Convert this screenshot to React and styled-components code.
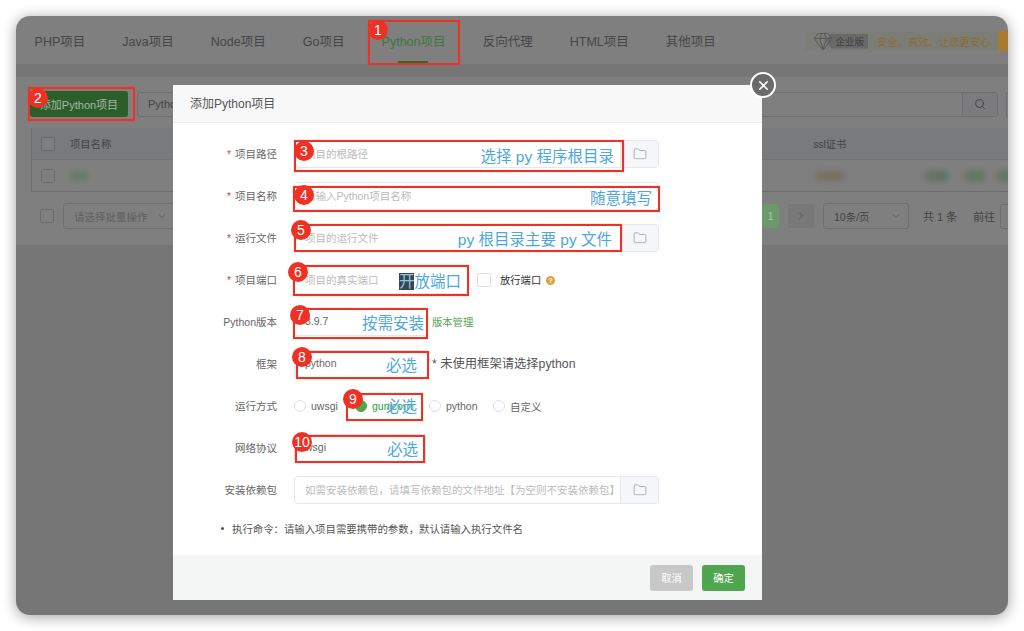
import React from 'react';
import styled, { createGlobalStyle, css } from 'styled-components';
import { ChevronDown, ChevronRight, Folder, Gem, Search, X } from 'lucide-react';

const GlobalStyle = createGlobalStyle`
    html, body {
        margin: 0;
        background: #fff;
    }
    * {
        box-sizing: border-box;
    }
`;

// brighter than the dimming layer allows, so these sit above it with their final colours
const aboveOverlay = css`
    position: relative;
    z-index: 2;
`;

const Root = styled.div`
    position: relative;
    width: 1024px;
    height: 631px;
    padding: 16px;
    overflow: hidden;
    font-family: 'Liberation Sans', 'Noto Sans CJK SC', sans-serif;
`;

const Window = styled.div`
    position: relative;
    isolation: isolate;
    display: flex;
    flex-direction: column;
    height: 599px;
    border-radius: 14px;
    overflow: hidden;
    background: #ececec;
    box-shadow: 0 2px 14px rgba(0, 0, 0, 0.38);
`;

const TopNav = styled.div`
    display: flex;
    align-items: stretch;
    height: 48px;
    background: #fff;
    flex: none;
`;

const NavList = styled.div`
    display: flex;
`;

const NavItem = styled.div`
    position: relative;
    display: flex;
    align-items: center;
    padding: 0 18.55px;
    font-size: 12.5px;
    white-space: nowrap;
    color: ${(p) => (p.$active ? '#79ee79' : '#8c8c8c')};

    &::after {
        content: '';
        display: ${(p) => (p.$active ? 'block' : 'none')};
        position: absolute;
        left: 35px;
        width: 30px;
        bottom: 1px;
        height: 2px;
        background: #56d856;
    }
`;

const Promo = styled.div`
    display: flex;
    align-items: center;
    margin: 16px 0 14px auto;
    height: 18px;
    width: 203px;
    background: #fbfaf0;
    padding-left: 8px;
    flex: none;
`;

const PromoGem = styled.span`
    position: relative;
    z-index: 1;
    display: flex;
    color: #a8a8a8;
    flex: none;
`;

const PromoTag = styled.span`
    display: flex;
    align-items: center;
    justify-content: flex-end;
    width: 42px;
    height: 15px;
    margin-left: -7px;
    padding-right: 4px;
    background: #d2d2d2;
    color: #808080;
    font-size: 9.5px;
    clip-path: polygon(5px 0, 100% 0, 100% 100%, 5px 100%, 0 50%);
    flex: none;
`;

const PromoText = styled.span`
    ${aboveOverlay}
    margin-left: 9px;
    font-size: 10.3px;
    white-space: nowrap;
    color: #8c6a30;
`;

const PromoButton = styled.span`
    ${aboveOverlay}
    width: 10px;
    height: 20px;
    margin-left: 8px;
    background: #a87c30;
    border-radius: 2px 0 0 2px;
    flex: none;
`;

const Content = styled.div`
    margin-top: 13px;
    height: 168px;
    padding: 14px 0 0 15px;
    background: #fff;
    flex: none;
`;

const Toolbar = styled.div`
    display: flex;
    align-items: center;
    height: 26px;
`;

const PrimaryButton = styled.div`
    ${aboveOverlay}
    display: flex;
    align-items: center;
    justify-content: center;
    width: 98px;
    height: 26px;
    margin-left: -1px;
    border-radius: 3px;
    background: #2c5e2c;
    color: #a4b8a4;
    font-size: 11px;
`;

const GhostButton = styled.div`
    display: flex;
    align-items: center;
    width: 70px;
    height: 25px;
    margin-left: 9px;
    padding-left: 10px;
    border: 1px solid #d8dce2;
    border-radius: 3px;
    color: #888;
    font-size: 11px;
`;

const SearchBox = styled.div`
    display: flex;
    margin-left: auto;
    height: 25px;
    width: 300px;
    border: 1px solid #d8dce2;
    border-radius: 3px;
    justify-content: flex-end;
`;

const SearchButton = styled.div`
    display: flex;
    align-items: center;
    justify-content: center;
    width: 35px;
    background: #f6f7fa;
    border-left: 1px solid #d8dce2;
    color: #888;
`;

const CutOffBox = styled.div`
    width: ${(p) => p.$width}px;
    height: 25px;
    margin-left: ${(p) => p.$left}px;
    border: 1px solid #d8dce2;
    border-right: none;
    border-radius: 3px 0 0 3px;
    flex: none;
`;

const Table = styled.div`
    margin-top: 11px;
    border-left: 1px solid #d8d8d8;
    border-bottom: 1px solid #d8d8d8;
`;

const TableRow = styled.div`
    position: relative;
    display: flex;
    align-items: center;
    height: ${(p) => (p.$head ? 32 : 31)}px;
    padding-left: 9px;
    background: ${(p) => (p.$head ? '#f2f4f7' : '#fff')};
    border-bottom: ${(p) => (p.$head ? '1px solid #e6e6e6' : 'none')};
`;

const CheckBox = styled.span`
    display: block;
    width: 14px;
    height: 14px;
    border: 1px solid #d0d4da;
    border-radius: 2px;
    background: #fff;
    flex: none;
`;

const HeadCell = styled.span`
    font-size: 10.3px;
    color: #888;
    margin-left: ${(p) => p.$left}px;
    white-space: nowrap;
`;

const Blob = styled.span`
    display: block;
    width: ${(p) => p.$width}px;
    height: 10px;
    margin-left: ${(p) => p.$left}px;
    border-radius: 4px;
    background: ${(p) => p.$color};
    filter: blur(3px);
    flex: none;
`;

const Pager = styled.div`
    display: flex;
    align-items: center;
    height: 26px;
    margin-top: 11px;
    padding-left: 9px;
    font-size: 11px;
    color: #888;
`;

const PagerSelect = styled.div`
    display: flex;
    align-items: center;
    justify-content: space-between;
    width: ${(p) => p.$width}px;
    height: 26px;
    margin-left: ${(p) => p.$left}px;
    padding: 0 6px 0 10px;
    border: 1px solid #d8dce2;
    border-radius: 3px;
    color: ${(p) => p.$color || '#c0c0c0'};
    font-size: 10.5px;
    white-space: nowrap;
    flex: none;
`;

const PageCurrent = styled.span`
    ${aboveOverlay}
    display: flex;
    align-items: center;
    justify-content: center;
    width: 17px;
    height: 24px;
    margin-left: 587px;
    border-radius: 0 2px 2px 0;
    background: #6a9a6a;
    color: #a8c8a8;
    flex: none;
`;

const PageNext = styled.span`
    display: flex;
    align-items: center;
    justify-content: center;
    width: 26px;
    height: 24px;
    margin-left: 9px;
    border-radius: 2px;
    background: #f0f0f1;
    color: #b0b0b0;
    flex: none;
`;

const PagerText = styled.span`
    margin-left: ${(p) => p.$left}px;
    white-space: nowrap;
    flex: none;
`;

const Overlay = styled.div`
    position: absolute;
    inset: 0;
    z-index: 1;
    padding: 69px 0 0 157px;
    background: rgba(0, 0, 0, 0.5);
`;

const Modal = styled.div`
    position: relative;
    display: flex;
    flex-direction: column;
    width: 589px;
    height: 515px;
    background: #fff;
    border-radius: 2px;
`;

const ModalHeader = styled.div`
    display: flex;
    align-items: center;
    height: 38px;
    padding: 0 0 2px 17px;
    background: #f8f8f8;
    border-bottom: 1px solid #eee;
    color: #555;
    font-size: 12px;
    flex: none;
`;

const CloseButton = styled.div`
    position: absolute;
    top: -13px;
    right: -14px;
    display: flex;
    align-items: center;
    justify-content: center;
    width: 26px;
    height: 26px;
    border: 2px solid #fff;
    border-radius: 50%;
    background: #6a6a6a;
    color: #fff;
`;

const ModalBody = styled.div`
    flex: 1;
    padding-top: 10px;
`;

const FormRow = styled.div`
    display: flex;
    align-items: center;
    height: 42px;
`;

const FieldLabel = styled.div`
    width: 104px;
    margin-right: 17px;
    padding-bottom: 2px;
    text-align: right;
    font-size: 10.5px;
    color: #666;
    white-space: nowrap;
    flex: none;
`;

const Required = styled.span`
    color: #e5443a;
    margin-right: 4px;
`;

const InputGroup = styled.div`
    display: flex;
    width: ${(p) => p.$width}px;
    height: 28px;
    border: 1px solid #e4e7ed;
    border-radius: 4px;
    overflow: hidden;
    flex: none;
`;

const InputText = styled.div`
    display: flex;
    align-items: center;
    flex: 1;
    padding: 0 0 2px 10px;
    font-size: 10.5px;
    white-space: nowrap;
    color: ${(p) => (p.$value ? '#666' : '#bbb')};
`;

const FolderButton = styled.div`
    display: flex;
    align-items: center;
    justify-content: center;
    width: 38px;
    background: #f5f7fa;
    border-left: 1px solid #e4e7ed;
    color: #999;
    flex: none;
`;

const Hint = styled.span`
    margin-left: ${(p) => p.$left}px;
    padding-bottom: 2px;
    font-size: ${(p) => p.$size}px;
    color: ${(p) => p.$color};
    white-space: nowrap;
`;

const PortCheck = styled.span`
    display: block;
    width: 14px;
    height: 14px;
    margin-left: 9px;
    border: 1px solid #dcdfe6;
    border-radius: 2px;
    flex: none;
`;

const HelpDot = styled.span`
    display: flex;
    align-items: center;
    justify-content: center;
    width: 9px;
    height: 9px;
    margin-left: 5px;
    border-radius: 50%;
    background: #e0a040;
    color: #fff;
    font-size: 7px;
    font-weight: 700;
    flex: none;
`;

const RadioGroup = styled.div`
    display: flex;
    align-items: center;
`;

const RadioItem = styled.div`
    display: flex;
    align-items: center;
    width: ${(p) => p.$width}px;
    font-size: 10.5px;
    color: ${(p) => (p.$on ? '#20a53a' : '#666')};
    white-space: nowrap;
`;

const RadioMark = styled.span`
    display: block;
    width: 12px;
    height: 12px;
    margin-right: 5px;
    border-radius: 50%;
    border: 1px solid ${(p) => (p.$on ? '#4fa64f' : '#dcdfe6')};
    background: ${(p) => (p.$on ? '#4fa64f' : '#fff')};
    flex: none;
`;

const NoteLine = styled.div`
    display: flex;
    align-items: center;
    margin-top: 10px;
    padding-left: 48px;
    font-size: 10.4px;
    color: #555;
    white-space: nowrap;

    &::before {
        content: '';
        width: 3px;
        height: 3px;
        margin-right: 8px;
        border-radius: 50%;
        background: #555;
    }
`;

const ModalFooter = styled.div`
    display: flex;
    justify-content: flex-end;
    align-items: center;
    gap: 9px;
    height: 45px;
    padding-right: 17px;
    background: #f4f6f5;
    flex: none;
`;

const FooterButton = styled.div`
    display: flex;
    align-items: center;
    justify-content: center;
    width: 43px;
    height: 26px;
    border-radius: 3px;
    background: ${(p) => (p.$primary ? '#4fa64f' : '#c8c8c8')};
    color: #fff;
    font-size: 10.3px;
`;

const Markup = styled.div`
    position: absolute;
    left: ${(p) => p.$x}px;
    top: ${(p) => p.$y}px;
    width: ${(p) => p.$w}px;
    height: ${(p) => p.$h}px;
    border: 2px solid #ee3124;
    box-shadow: 0 0 1px rgba(238, 49, 36, 0.5);
`;

const Badge = styled.span`
    position: absolute;
    left: ${(p) => p.$x - 10}px;
    top: ${(p) => p.$y - 10}px;
    display: flex;
    align-items: center;
    justify-content: center;
    width: 20px;
    height: 20px;
    border-radius: 50%;
    background: #ee3124;
    color: #fff;
    font-size: 14px;
`;

const Callout = styled.span`
    position: absolute;
    right: ${(p) => 1024 - p.$right}px;
    top: ${(p) => p.$y - 10}px;
    height: 20px;
    line-height: 20px;
    font-size: 15.5px;
    color: #4ea7da;
    white-space: nowrap;
`;

const Highlight = styled.span`
    background: #37474f;
    color: #8fc4e4;
`;

const navItems = ['PHP项目', 'Java项目', 'Node项目', 'Go项目', 'Python项目', '反向代理', 'HTML项目', '其他项目'];

const markups = [
    { id: 1, x: 368, y: 20, w: 92, h: 45, bx: 378, by: 30 },
    { id: 2, x: 28, y: 87, w: 107, h: 34, bx: 38, by: 98 },
    { id: 3, x: 294, y: 140, w: 330, h: 32, bx: 304, by: 151, text: '选择 py 程序根目录', right: 614, ty: 157 },
    { id: 4, x: 293, y: 186, w: 367, h: 26, bx: 304, by: 195, text: '随意填写', right: 652, ty: 199 },
    { id: 5, x: 294, y: 224, w: 328, h: 28, bx: 301, by: 230, text: 'py 根目录主要 py 文件', right: 612, ty: 240 },
    { id: 6, x: 293, y: 265, w: 176, h: 31, bx: 298, by: 272, right: 461, ty: 282 },
    { id: 7, x: 293, y: 308, w: 135, h: 31, bx: 300, by: 315, text: '按需安装', right: 424, ty: 324 },
    { id: 8, x: 296, y: 351, w: 133, h: 28, bx: 302, by: 357, text: '必选', right: 417, ty: 366 },
    { id: 9, x: 346, y: 393, w: 77, h: 28, bx: 353, by: 399, text: '必选', right: 417, ty: 407 },
    { id: 10, x: 295, y: 435, w: 130, h: 28, bx: 302, by: 442, text: '必选', right: 418, ty: 450 },
];

const BackgroundPage = () => (
    <>
        <TopNav>
            <NavList>
                {navItems.map((item) => (
                    <NavItem key={item} $active={item === 'Python项目'}>
                        {item}
                    </NavItem>
                ))}
            </NavList>
            <Promo>
                <PromoGem>
                    <Gem size={20} strokeWidth={1.1} />
                </PromoGem>
                <PromoTag>企业版</PromoTag>
                <PromoText>安全、高效、让您更安心</PromoText>
                <PromoButton />
            </Promo>
        </TopNav>
        <Content>
            <Toolbar>
                <PrimaryButton>添加Python项目</PrimaryButton>
                <GhostButton>Python</GhostButton>
                <SearchBox>
                    <SearchButton>
                        <Search size={12} />
                    </SearchButton>
                </SearchBox>
                <CutOffBox $width={2} $left={8} />
            </Toolbar>
            <Table>
                <TableRow $head>
                    <CheckBox />
                    <HeadCell $left={15}>项目名称</HeadCell>
                    <HeadCell $left={702}>ssl证书</HeadCell>
                </TableRow>
                <TableRow>
                    <CheckBox />
                    <Blob $width={18} $left={15} $color="#d6ecd6" />
                    <Blob $width={30} $left={727} $color="#f5dcc0" />
                    <Blob $width={24} $left={80} $color="#c4e2c4" />
                    <Blob $width={20} $left={16} $color="#c4e2c4" />
                    <Blob $width={20} $left={12} $color="#c4e2c4" />
                </TableRow>
            </Table>
            <Pager>
                <CheckBox />
                <PagerSelect $width={112} $left={9}>
                    请选择批量操作
                    <ChevronDown size={12} />
                </PagerSelect>
                <PageCurrent>1</PageCurrent>
                <PageNext>
                    <ChevronRight size={12} />
                </PageNext>
                <PagerSelect $width={86} $left={9} $color="#888">
                    10条/页
                    <ChevronDown size={12} color="#bbb" />
                </PagerSelect>
                <PagerText $left={14}>共 1 条</PagerText>
                <PagerText $left={16}>前往</PagerText>
                <CutOffBox $width={12} $left={5} />
            </Pager>
        </Content>
    </>
);

const FolderAddon = () => (
    <FolderButton>
        <Folder size={14} strokeWidth={1.3} />
    </FolderButton>
);

const Field = ({ label, required, children }) => (
    <FormRow>
        <FieldLabel>
            {required && <Required>*</Required>}
            {label}
        </FieldLabel>
        {children}
    </FormRow>
);

const AddProjectModal = () => (
    <Modal>
        <CloseButton>
            <X size={15} strokeWidth={2.6} />
        </CloseButton>
        <ModalHeader>添加Python项目</ModalHeader>
        <ModalBody>
            <Field label="项目路径" required>
                <InputGroup $width={365}>
                    <InputText>项目的根路径</InputText>
                    <FolderAddon />
                </InputGroup>
            </Field>
            <Field label="项目名称" required>
                <InputGroup $width={365}>
                    <InputText>请输入Python项目名称</InputText>
                </InputGroup>
            </Field>
            <Field label="运行文件" required>
                <InputGroup $width={365}>
                    <InputText>项目的运行文件</InputText>
                    <FolderAddon />
                </InputGroup>
            </Field>
            <Field label="项目端口" required>
                <InputGroup $width={174}>
                    <InputText>项目的真实端口</InputText>
                </InputGroup>
                <PortCheck />
                <Hint $left={9} $size={10.3} $color="#333">
                    放行端口
                </Hint>
                <HelpDot>?</HelpDot>
            </Field>
            <Field label="Python版本">
                <InputGroup $width={134}>
                    <InputText $value>3.9.7</InputText>
                </InputGroup>
                <Hint $left={4} $size={10.3} $color="#4fa64f">
                    版本管理
                </Hint>
            </Field>
            <Field label="框架">
                <InputGroup $width={134}>
                    <InputText $value>python</InputText>
                </InputGroup>
                <Hint $left={4} $size={12.3} $color="#555">
                    * 未使用框架请选择python
                </Hint>
            </Field>
            <Field label="运行方式">
                <RadioGroup>
                    <RadioItem $width={61}>
                        <RadioMark />
                        uwsgi
                    </RadioItem>
                    <RadioItem $width={74} $on>
                        <RadioMark $on />
                        gunicorn
                    </RadioItem>
                    <RadioItem $width={64}>
                        <RadioMark />
                        python
                    </RadioItem>
                    <RadioItem $width={60}>
                        <RadioMark />
                        自定义
                    </RadioItem>
                </RadioGroup>
            </Field>
            <Field label="网络协议">
                <InputGroup $width={132}>
                    <InputText $value>wsgi</InputText>
                </InputGroup>
            </Field>
            <Field label="安装依赖包">
                <InputGroup $width={365}>
                    <InputText>如需安装依赖包，请填写依赖包的文件地址【为空则不安装依赖包】</InputText>
                    <FolderAddon />
                </InputGroup>
            </Field>
            <NoteLine>执行命令：请输入项目需要携带的参数，默认请输入执行文件名</NoteLine>
        </ModalBody>
        <ModalFooter>
            <FooterButton>取消</FooterButton>
            <FooterButton $primary>确定</FooterButton>
        </ModalFooter>
    </Modal>
);

const App = () => (
    <Root>
        <GlobalStyle />
        <Window>
            <BackgroundPage />
            <Overlay>
                <AddProjectModal />
            </Overlay>
        </Window>
        {markups.map((m) => (
            <React.Fragment key={m.id}>
                <Markup $x={m.x} $y={m.y} $w={m.w} $h={m.h} />
                <Badge $x={m.bx} $y={m.by}>
                    {m.id}
                </Badge>
                {m.text && (
                    <Callout $right={m.right} $y={m.ty}>
                        {m.text}
                    </Callout>
                )}
                {m.id === 6 && (
                    <Callout $right={m.right} $y={m.ty}>
                        <Highlight>开</Highlight>放端口
                    </Callout>
                )}
            </React.Fragment>
        ))}
    </Root>
);

export default App;
